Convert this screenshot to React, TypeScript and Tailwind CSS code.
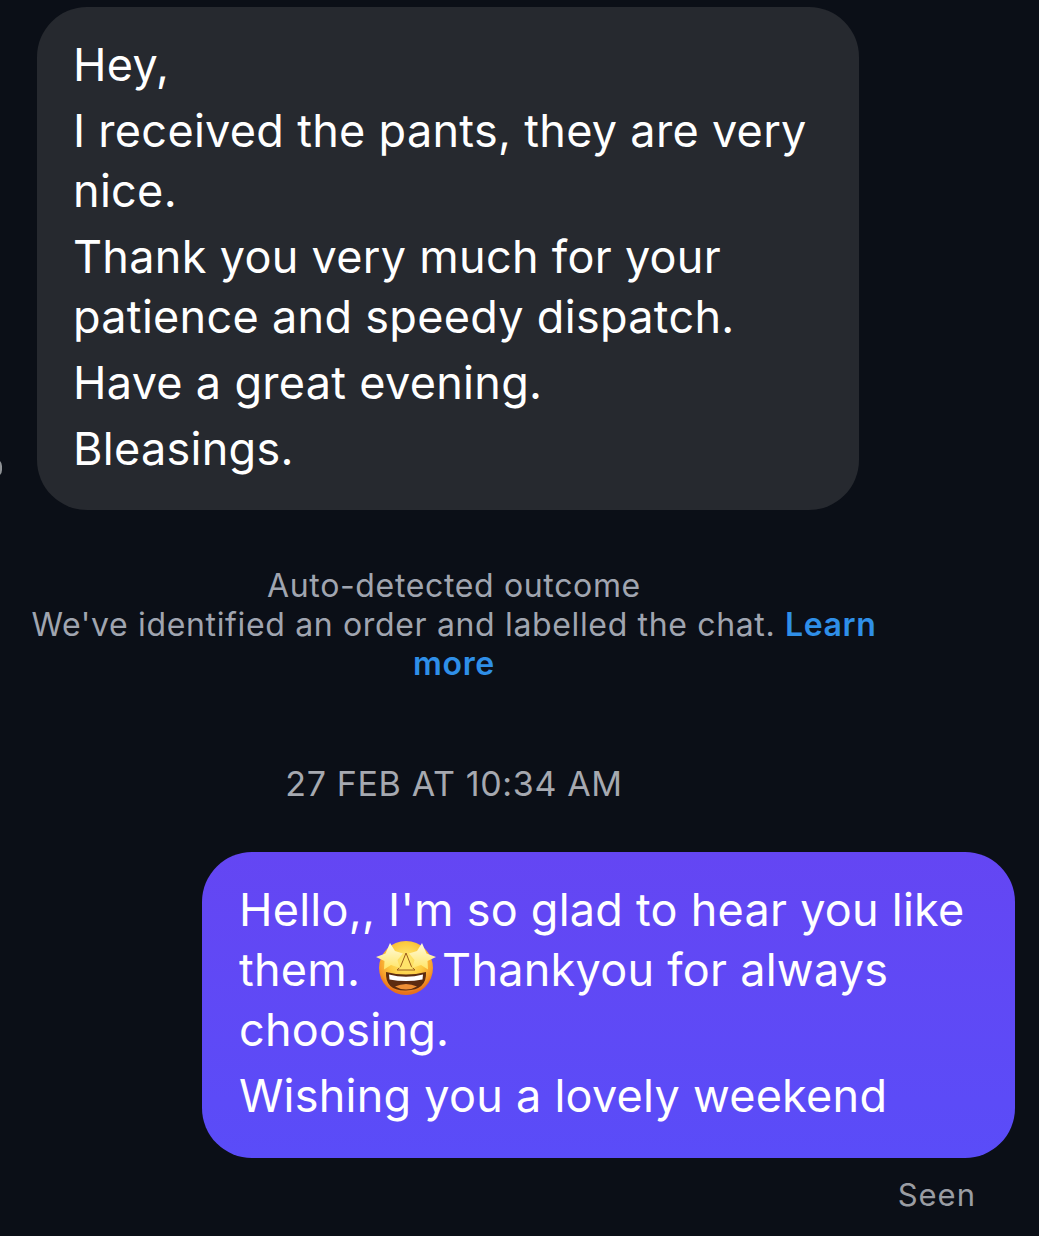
function StarStruck() {
  return (
    <svg viewBox="0 0 60 60" className="inline-block w-[60px] h-[60px] ml-[3px] mr-[6px] my-[-12px] align-baseline">
      <defs>
        <radialGradient id="face" cx="50%" cy="36%" r="60%">
          <stop offset="0%" stopColor="#fff07c" />
          <stop offset="55%" stopColor="#fcc93f" />
          <stop offset="85%" stopColor="#f59a2a" />
          <stop offset="100%" stopColor="#e8711b" />
        </radialGradient>
        <linearGradient id="star" x1="0" y1="0" x2="0" y2="1">
          <stop offset="0%" stopColor="#fffce0" />
          <stop offset="100%" stopColor="#ffe566" />
        </linearGradient>
      </defs>
      <circle cx="30" cy="30" r="27" fill="url(#face)" />
      <path d="M30 15l4 10q0.500 4 5 7h-18q4.500-3 5-7z" fill="#ffe36a" stroke="#9a5a1a" strokeWidth="1" />
      <path d="M14 5l5 8 8 2.500-5.500 6.500 2.500 8-9-3-7 4.500 0.500-8.500-8.500-4 9.500-3.500z" fill="url(#star)" />
      <path d="M46 5l-5 8-8 2.500 5.500 6.500-2.500 8 9-3 7 4.500-0.500-8.500 8.500-4-9.500-3.500z" fill="url(#star)" />
      <path d="M10 34q20 5 40 0q1 18-20 18.500t-20-18.500z" fill="#5c2b10" />
      <path d="M13 36.500q17 4.500 34 0l-0.500 5q-16.500 3-33 0z" fill="#ffffff" />
      <path d="M19 48.500q11-5 22 0q-5 3-11 3t-11-3z" fill="#ef8f35" />
    </svg>
  );
}

export default function App() {
  return (
    <div className="relative w-[1039px] h-[1236px] overflow-hidden bg-[#0b0f17] font-['Inter','Liberation_Sans',sans-serif] text-white">
      {/* sliver of the avatar cut off by the left edge */}
      <div className="absolute left-[-12px] top-[459px] w-[14px] h-[18px] rounded-full bg-[#8f9296]" />

      <div className="pt-[7px] pl-[37px]">
        <div className="w-[822px] h-[503px] rounded-[50px] bg-[#26292f] pl-[36px] pt-[28px] text-[45px] leading-[60px] tracking-[0.3px] flex flex-col gap-[6px]">
          <p>Hey,</p>
          <p>
            I received the pants, they are very
            <br />
            nice.
          </p>
          <p>
            Thank you very much for your
            <br />
            patience and speedy dispatch.
          </p>
          <p>Have a great evening.</p>
          <p>Bleasings.</p>
        </div>
      </div>

      <div className="mt-[56px] w-[908px] text-center text-[32px] leading-[39px] tracking-[0.65px] text-[#a0a5b0]">
        <p>Auto-detected outcome</p>
        <p>
          We've identified an order and labelled the chat.{" "}
          <span className="font-semibold text-[#2f8fe8]">Learn</span>
          <br />
          <span className="font-semibold text-[#2f8fe8]">more</span>
        </p>
      </div>

      <p className="mt-[80px] w-[908px] text-center text-[34px] leading-[42px] tracking-[0.65px] text-[#a6a9b0]">27 FEB AT 10:34 AM</p>

      <div className="mt-[47px] ml-[202px] w-[813px] h-[306px] rounded-[50px] bg-gradient-to-b from-[#6446f3] to-[#5a4cf8] pl-[37px] pt-[28px] text-[45px] leading-[60px] tracking-[0.25px] flex flex-col gap-[6px]">
        <p>
          Hello,, I'm so glad to hear you like
          <br />
          them. <StarStruck />Thankyou for always
          <br />
          choosing.
        </p>
        <p>Wishing you a lovely weekend</p>
      </div>

      <p className="mt-[16px] pr-[63px] text-right text-[31px] leading-[42px] tracking-[1px] text-[#9a9da3]">Seen</p>
    </div>
  );
}
